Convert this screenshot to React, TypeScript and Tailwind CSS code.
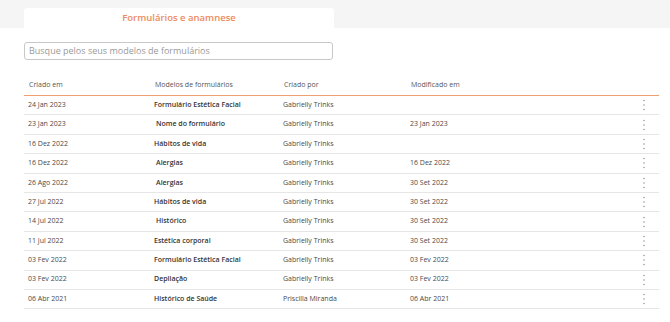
import React from "react";

const rows: [string, string, string, string, boolean][] = [
  ["24 Jan 2023", "Formulário Estética Facial", "Gabrielly Trinks", "", false],
  ["23 Jan 2023", "Nome do formulário", "Gabrielly Trinks", "23 Jan 2023", true],
  ["16 Dez 2022", "Hábitos de vida", "Gabrielly Trinks", "", false],
  ["16 Dez 2022", "Alergias", "Gabrielly Trinks", "16 Dez 2022", true],
  ["26 Ago 2022", "Alergias", "Gabrielly Trinks", "30 Set 2022", true],
  ["27 Jul 2022", "Hábitos de vida", "Gabrielly Trinks", "30 Set 2022", false],
  ["14 Jul 2022", "Histórico", "Gabrielly Trinks", "30 Set 2022", true],
  ["11 Jul 2022", "Estética corporal", "Gabrielly Trinks", "30 Set 2022", false],
  ["03 Fev 2022", "Formulário Estética Facial", "Gabrielly Trinks", "03 Fev 2022", false],
  ["03 Fev 2022", "Depilação", "Gabrielly Trinks", "03 Fev 2022", false],
  ["06 Abr 2021", "Histórico de Saúde", "Priscilla Miranda", "06 Abr 2021", false],
];

function Dots() {
  return (
    <svg width="4" height="12" viewBox="0 0 4 12">
      <circle cx="2" cy="1.6" r="0.75" fill="#909090" />
      <circle cx="2" cy="6" r="0.75" fill="#909090" />
      <circle cx="2" cy="10.4" r="0.75" fill="#909090" />
    </svg>
  );
}

export default function App() {
  return (
    <div className="min-h-[322px] w-[670px] bg-white font-['Open_Sans',sans-serif]">
      <div className="h-[28px] bg-[#f5f5f5] pt-[8px] pl-[24px]">
        <div className="flex h-[20px] w-[310px] items-center justify-center rounded-t-[3px] bg-white text-[9.5px] font-semibold text-[#ee8a5d]">
          Formulários e anamnese
        </div>
      </div>
      <div className="pl-[24px] pr-[11px]">
        <div className="mt-[14px] flex h-[18px] w-[309px] items-center rounded-[3px] border border-[#c8c8c8] pl-[4px] text-[9px] text-[#9a9a9a]">
          Busque pelos seus modelos de formulários
        </div>
        <div className="mt-[16px]">
          <div className="grid h-[20px] grid-cols-[126px_129px_127px_1fr_30px] items-center border-b border-[#f0a070] pl-[5px] text-[7px] text-[#555]">
            <div>Criado em</div>
            <div>Modelos de formulários</div>
            <div>Criado por</div>
            <div>Modificado em</div>
            <div />
          </div>
          {rows.map(([c, m, by, mod, indent], i) => (
            <div
              key={i}
              className="grid h-[19.4px] grid-cols-[126px_129px_127px_1fr_30px] items-center border-b border-[#e6e6e6] pl-[4px] text-[7px] text-[#4a4a4a]"
            >
              <div>{c}</div>
              <div className={`font-semibold text-[#333] ${indent ? "pl-[2px]" : ""}`}>{m}</div>
              <div>{by}</div>
              <div>{mod}</div>
              <div className="flex items-center justify-center">
                <Dots />
              </div>
            </div>
          ))}
        </div>
      </div>
    </div>
  );
}
